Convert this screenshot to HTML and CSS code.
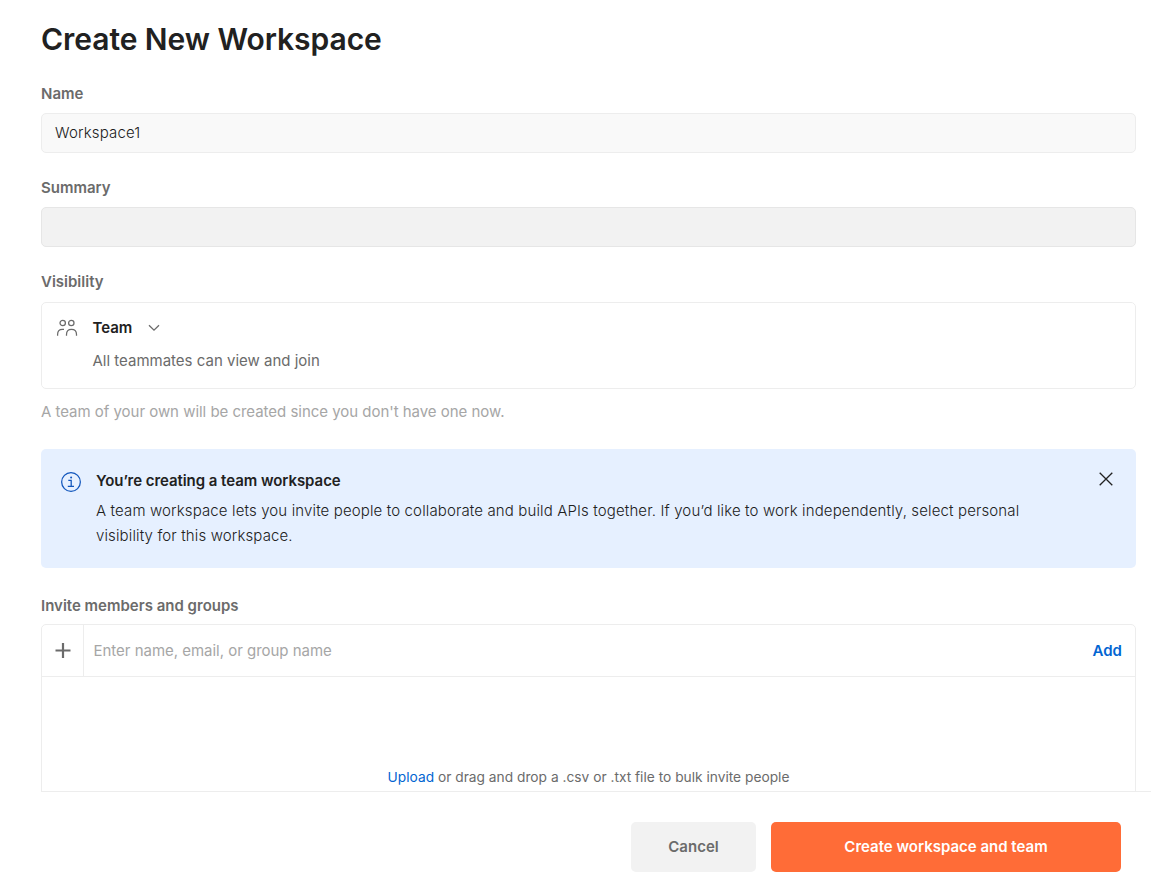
FILE: index.html
```html
<!DOCTYPE html>
<html lang="en">
<head>
<meta charset="utf-8">
<title>Create New Workspace</title>
<link rel="stylesheet" href="styles.css">
</head>
<body>
<main class="form">
  <h1 class="title">Create New Workspace</h1>
  <label class="label" for="name">Name</label>
  <div class="field" id="name"><span class="field-text">Workspace1</span></div>
  <label class="label" for="summary">Summary</label>
  <div class="field field-filled" id="summary"></div>
  <div class="label">Visibility</div>
  <section class="visibility">
    <svg class="team-icon" viewBox="0 0 22 18" width="22" height="18"><g fill="none" stroke="#6b6b6b" stroke-width="1.25"><circle cx="6.7" cy="4" r="2.7"/><circle cx="15.3" cy="4" r="2.7"/><path d="M1.6 16.8v-1.4c0-3.2 2-5 4.8-5h1.6M10.5 16.8v-1.4c0-3.2 2-5 5-5s5 1.8 5 5v1.4"/></g></svg>
    <div class="visibility-body">
      <div class="visibility-head"><span class="visibility-name">Team</span><svg viewBox="0 0 12 8" width="12" height="8"><path d="M1 1.2l5 5 5-5" fill="none" stroke="#6b6b6b" stroke-width="1.3"/></svg></div>
      <div class="visibility-text"><span class="visibility-desc">All teammates can view and join</span></div>
    </div>
  </section>
  <p class="hint"><span class="hint-text">A team of your own will be created since you don't have one now.</span></p>
  <section class="banner">
    <svg class="info-icon" viewBox="0 0 20 20" width="20" height="20"><circle cx="10" cy="10" r="9.35" fill="none" stroke="#1055bc" stroke-width="1.25"/><path d="M7.3 8.4h2.9v5.7M6.8 14.3h6.2" fill="none" stroke="#1055bc" stroke-width="1.25"/><circle cx="10.1" cy="5.6" r="1" fill="#1055bc"/></svg>
    <div class="banner-body">
      <h2 class="banner-title">You’re creating a team workspace</h2>
      <p class="banner-text">A team workspace lets you invite people to collaborate and build APIs together. If you’d like to work independently, select personal<br>visibility for this workspace.</p>
    </div>
    <svg class="close-icon" viewBox="0 0 14 14" width="14" height="14"><path d="M.7.7l12.6 12.6M13.3.7L.7 13.3" fill="none" stroke="#212121" stroke-width="1.3"/></svg>
  </section>
  <div class="label label-invite">Invite members and groups</div>
  <section class="invite">
    <div class="invite-row">
      <div class="plus"><svg viewBox="0 0 16 16" width="16" height="16"><path d="M8 0v15M.5 7.5h15" stroke="#6b6b6b" stroke-width="2.2"/></svg></div>
      <span class="placeholder">Enter name, email, or group name</span>
      <span class="add">Add</span>
    </div>
    <div class="dropzone"><p class="drop-text"><span class="upload">Upload</span> or drag and drop a .csv or .txt file to bulk invite people</p></div>
  </section>
</main>
<footer class="footer">
  <button class="button cancel">Cancel</button>
  <button class="button create">Create workspace and team</button>
</footer>
</body>
</html>
```
FILE: styles.css
```css
* { box-sizing: border-box; }
body { margin: 0; height: 890px; overflow: hidden; display: flex; flex-direction: column; background: #fff; color: #212121; font: 400 15px/20px Inter, sans-serif; }
h1, h2, p { margin: 0; }
svg { display: block; flex: none; }
.form { height: 791px; flex: none; overflow: hidden; display: flex; flex-direction: column; padding: 19px 32px 0 41px; }
.title { font-size: 30px; line-height: 40px; font-weight: 600; letter-spacing: -.05px; margin-bottom: 25px; white-space: nowrap; }
.label { flex: none; color: #6b6b6b; font-weight: 600; margin-bottom: 9px; }
.label-invite { margin-bottom: 8px; }
.field { flex: none; height: 40px; border: 1px solid #ededed; border-radius: 5px; background: #f9f9f9; padding: 9px 13px; margin-bottom: 25px; }
.field-text { font-weight: 300; letter-spacing: .17px; }
.field-filled { background: #f2f2f2; border-color: #e6e6e6; }
.visibility { flex: none; display: flex; height: 87px; margin-top: 1px; border: 1px solid #ededed; border-radius: 5px; padding: 15px 14px; }
.team-icon { margin-top: 1px; }
.visibility-body { margin-left: 14.5px; }
.visibility-head { display: flex; align-items: center; gap: 16px; font-weight: 600; }
.visibility-text { margin-top: 13px; color: #6b6b6b; }
.hint { margin-top: 13px; color: #a6a6a6; letter-spacing: -.03px; }
.banner { flex: none; display: flex; height: 119px; margin: 27px 0 28px; padding: 22px 23px 0 20px; background: #e6f0ff; border-radius: 5px; }
.info-icon { margin-top: 1px; }
.banner-body { flex: 1; margin-left: 15px; white-space: nowrap; }
.banner-title { font-size: 15px; line-height: 20px; font-weight: 600; letter-spacing: -.05px; }
.banner-text { margin-top: 7px; line-height: 25px; font-weight: 300; letter-spacing: .13px; }
.close-icon { margin-top: 1px; }
.invite { flex: none; height: 200px; border: 1px solid #ededed; border-radius: 5px; }
.invite-row { display: flex; align-items: center; height: 52px; border-bottom: 1px solid #ededed; padding-right: 13px; }
.plus { width: 42px; align-self: stretch; display: grid; place-items: center; border-right: 1px solid #ededed; }
.placeholder { flex: 1; margin-left: 9.5px; color: #a6a6a6; letter-spacing: -.02px; }
.add { color: #0265d2; font-weight: 600; }
.dropzone { padding-top: 90px; text-align: center; color: #6b6b6b; }
.drop-text { font-size: 13.75px; }
.upload { color: #0265d2; }
.footer { width: 1110px; margin-left: 41px; height: 99px; border-top: 1px solid #ededed; display: flex; justify-content: flex-end; gap: 15px; padding: 30px 30px 0 0; }
.button { height: 50px; border: 0; border-radius: 5px; padding: 0; font: 600 15px/20px Inter, sans-serif; }
.cancel { width: 125px; color: #6b6b6b; background: #f2f2f2; }
.create { width: 350px; color: #fff; background: #ff6c37; }
```
